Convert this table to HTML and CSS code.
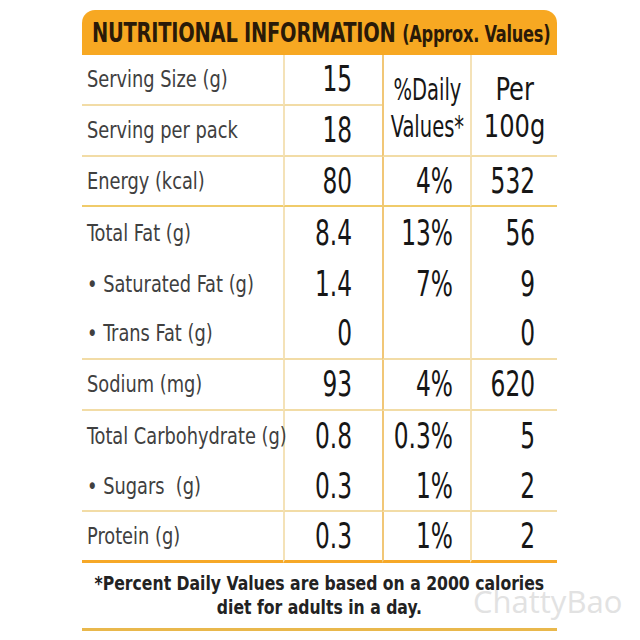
FILE: index.html
```html
<!DOCTYPE html>
<html>
<head>
<meta charset="utf-8">
<link rel="stylesheet" href="styles.css">
</head>
<body>
<div class="panel">
  <div class="title"><span class="title-in">NUTRITIONAL INFORMATION <span class="approx">(Approx. Values)</span></span></div>
  <div class="grid">
    <div class="c name ln"><span class="t">Serving Size (g)</span></div>
    <div class="c v1 ln"><span class="t">15</span></div>
    <div class="c hd h3 ln"><span class="t">%Daily<br>Values*</span></div>
    <div class="c hd h4 ln"><span class="t">Per<br>100g</span></div>
    <div class="c name ln"><span class="t">Serving per pack</span></div>
    <div class="c v1 ln"><span class="t">18</span></div>

    <div class="c name ln ln2"><span class="t">Energy (kcal)</span></div>
    <div class="c v1 ln ln2"><span class="t">80</span></div>
    <div class="c v2 ln ln2"><span class="t">4%</span></div>
    <div class="c v3 ln ln2"><span class="t">532</span></div>

    <div class="c name"><span class="t">Total Fat (g)</span></div>
    <div class="c v1"><span class="t">8.4</span></div>
    <div class="c v2"><span class="t">13%</span></div>
    <div class="c v3"><span class="t">56</span></div>

    <div class="c name"><span class="t">• Saturated Fat (g)</span></div>
    <div class="c v1"><span class="t">1.4</span></div>
    <div class="c v2"><span class="t">7%</span></div>
    <div class="c v3"><span class="t">9</span></div>

    <div class="c name ln"><span class="t">• Trans Fat (g)</span></div>
    <div class="c v1 ln"><span class="t">0</span></div>
    <div class="c v2 ln"></div>
    <div class="c v3 ln"><span class="t">0</span></div>

    <div class="c name ln"><span class="t">Sodium (mg)</span></div>
    <div class="c v1 ln"><span class="t">93</span></div>
    <div class="c v2 ln"><span class="t">4%</span></div>
    <div class="c v3 ln"><span class="t">620</span></div>

    <div class="c name"><span class="t">Total Carbohydrate (g)</span></div>
    <div class="c v1"><span class="t">0.8</span></div>
    <div class="c v2"><span class="t">0.3%</span></div>
    <div class="c v3"><span class="t">5</span></div>

    <div class="c name ln"><span class="t">• Sugars &nbsp;(g)</span></div>
    <div class="c v1 ln"><span class="t">0.3</span></div>
    <div class="c v2 ln"><span class="t">1%</span></div>
    <div class="c v3 ln"><span class="t">2</span></div>

    <div class="c name last"><span class="t">Protein (g)</span></div>
    <div class="c v1 last"><span class="t">0.3</span></div>
    <div class="c v2 last"><span class="t">1%</span></div>
    <div class="c v3 last"><span class="t">2</span></div>
  </div>
  <div class="foot"><span class="t">*Percent Daily Values are based on a 2000 calories<br>diet for adults in a day.</span></div>
</div>
<div class="watermark">ChattyBao</div>
</body>
</html>
```

FILE: styles.css
```css
html, body {
  margin: 0;
  padding: 0;
  background: #ffffff;
  width: 640px;
  height: 640px;
  overflow: hidden;
  position: relative;
}

.panel {
  margin: 10px 0 0 82px;
  width: 475px;
  font-family: "DejaVu Sans Condensed", "Liberation Sans Narrow", "DejaVu Sans", sans-serif;
  font-stretch: condensed;
}

.title {
  height: 45px;
  background: #f7a822;
  border-radius: 13px 13px 0 0;
  display: flex;
  align-items: center;
  padding-left: 10px;
  overflow: hidden;
  white-space: nowrap;
}

.title-in {
  display: inline-block;
  font-weight: bold;
  font-size: 27px;
  color: #2a1a08;
  transform: scaleX(0.8);
  transform-origin: left center;
  letter-spacing: -0.3px;
}

.approx {
  font-size: 22.5px;
}

.grid {
  display: grid;
  grid-template-columns: 201px 99px 88px 87px;
  grid-auto-rows: 50.8px;
}

.c {
  box-sizing: border-box;
  display: flex;
  align-items: center;
  white-space: nowrap;
}

.t {
  display: inline-block;
  white-space: nowrap;
}

.ln {
  border-bottom: 2px solid #f2dca6;
}

.ln2 {
  border-bottom-color: #f0cb6a;
}

.last {
  border-bottom: 3px solid #f6a828;
}

.name {
  padding-left: 5px;
  font-size: 23px;
  color: #404040;
}

.name .t {
  transform: scaleX(0.86);
  transform-origin: left center;
}

.v1, .v2, .v3 {
  justify-content: flex-end;
  font-size: 35px;
  color: #161616;
}

.v1 .t, .v2 .t, .v3 .t {
  transform: scaleX(0.74);
  transform-origin: right center;
}

.v1 {
  border-left: 2px solid #f4e2b8;
  padding-right: 30px;
}

.v2 {
  border-left: 2px solid #f1c777;
  padding-right: 17px;
}

.v3 {
  border-left: 2px solid #f4e2b8;
  padding-right: 22px;
}

.hd {
  grid-row: span 2;
  justify-content: center;
  text-align: center;
  font-size: 31px;
  line-height: 37px;
  padding-top: 7px;
  color: #161616;
}

.h3 .t {
  transform: scaleX(0.7);
  transform-origin: center center;
}

.h4 .t {
  font-size: 32px;
  transform: scaleX(0.84);
  transform-origin: center center;
}

.h3 {
  border-left: 2px solid #f1c777;
}

.h4 {
  border-left: 2px solid #f4e2b8;
}

.foot {
  box-sizing: border-box;
  height: 68px;
  border-bottom: 3px solid #e9b84c;
  display: flex;
  justify-content: center;
  text-align: center;
  font-size: 20px;
  line-height: 24px;
  padding-top: 8px;
  color: #222222;
  font-weight: bold;
}

.foot .t {
  transform: scaleX(0.87);
  transform-origin: center top;
}

.watermark {
  position: absolute;
  left: 473px;
  top: 580px;
  font-family: "Open Sans", "DejaVu Sans", sans-serif;
  font-size: 31px;
  color: #e2e2e2;
}
```
